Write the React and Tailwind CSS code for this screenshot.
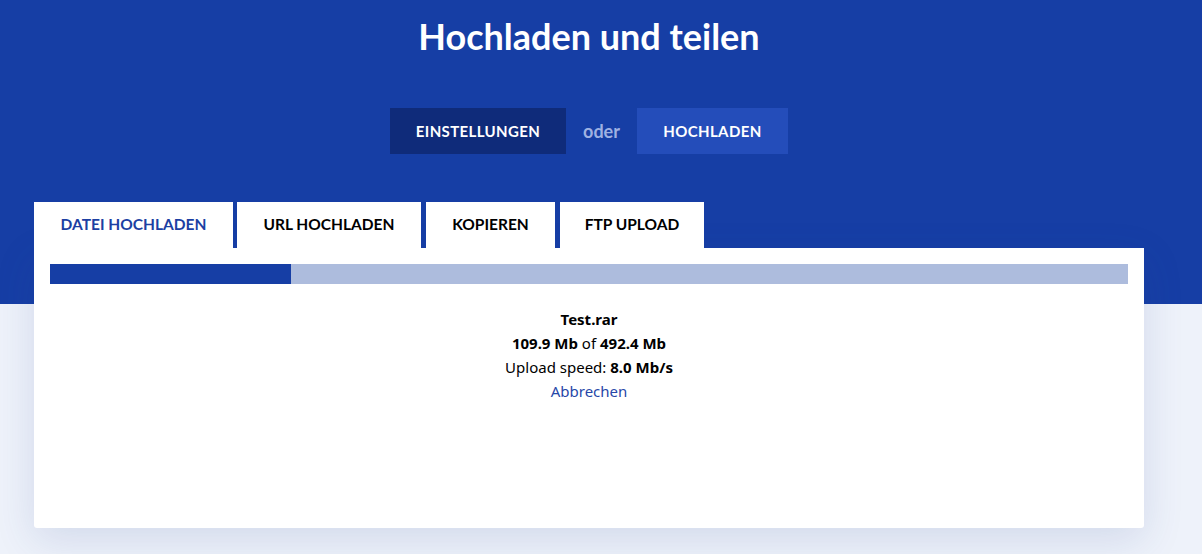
const tabs = [
  { label: 'DATEI HOCHLADEN', w: 'w-[199px]', active: true },
  { label: 'URL HOCHLADEN', w: 'w-[184px] ml-[4px]' },
  { label: 'KOPIEREN', w: 'w-[129px] ml-[5px]' },
  { label: 'FTP UPLOAD', w: 'w-[144px] ml-[5px]' },
]

export default function App() {
  const progress = (109.9 / 492.4) * 100

  return (
    <div className="min-h-[554px] bg-[#eef2fa] font-['Lato',sans-serif]">
      <div className="bg-[#163ea5] pt-[12px] pb-[56px]">
        <div className="pr-[24px]">
          <h1 className="text-center text-[36px] font-bold leading-[48px] text-white">Hochladen und teilen</h1>

          <div className="mt-[48px] flex items-center justify-center gap-[17px]">
            <button className="h-[46px] w-[176px] bg-[#0f2b7a] text-[15px] font-bold tracking-wide text-white">EINSTELLUNGEN</button>
            <span className="text-[18px] font-bold text-[#9fb1e2]">oder</span>
            <button className="h-[46px] w-[151px] bg-[#244dba] text-[15px] font-bold tracking-wide text-white">HOCHLADEN</button>
          </div>
        </div>

        <div className="mx-[34px] mt-[48px] flex">
          {tabs.map((t) => (
            <div
              key={t.label}
              className={`flex h-[46px] items-center justify-center bg-white text-[15.5px] font-bold ${t.w} ${t.active ? 'text-[#1c3fa3]' : 'text-black'}`}
            >
              {t.label}
            </div>
          ))}
        </div>
      </div>

      <div className="mx-[34px] -mt-[56px] h-[280px] w-[1110px] rounded-b-[3px] bg-white px-[16px] pt-[16px] shadow-[0_12px_40px_rgba(40,70,150,0.14)]">
        <div className="h-[20px] w-full bg-[#adbcdd]">
          <div className="h-full bg-[#163ea5]" style={{ width: `${progress}%` }} />
        </div>

        <div className="mt-[23px] text-center font-['Noto_Sans',sans-serif] text-[15px] leading-[24px] text-black">
          <div className="font-bold">Test.rar</div>
          <div>
            <span className="font-bold">109.9 Mb</span> of <span className="font-bold">492.4 Mb</span>
          </div>
          <div>
            Upload speed: <span className="font-bold">8.0 Mb/s</span>
          </div>
          <a className="text-[#2747a8]">Abbrechen</a>
        </div>
      </div>
    </div>
  )
}
